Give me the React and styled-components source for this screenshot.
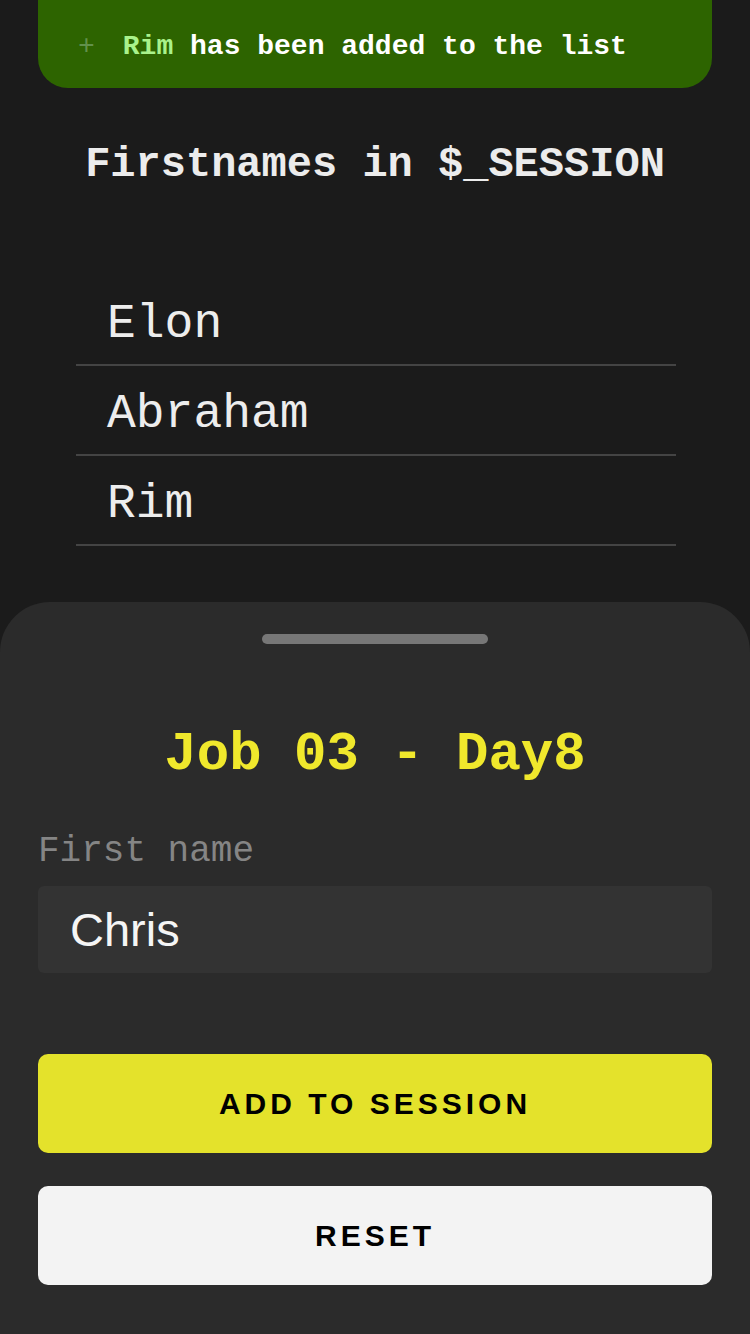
import React from "react";
import styled, { createGlobalStyle } from "styled-components";

const Global = createGlobalStyle`
  html, body { margin: 0; padding: 0; background: #1b1b1b; }
  body { font-family: "Liberation Mono", "Courier New", monospace; }
  * { box-sizing: border-box; }
`;

const Page = styled.div`
  min-height: 1334px;
  background: #1b1b1b;
  display: flex;
  flex-direction: column;
  overflow: hidden;
`;

const Notice = styled.div`
  margin: 0 38px;
  height: 88px;
  background: #2d6400;
  border-radius: 0 0 30px 30px;
  display: flex;
  align-items: center;
  padding: 4px 0 0 40px;
  font-family: "Liberation Mono", monospace;
  font-weight: 700;
  font-size: 28px;
  color: #ffffff;
  white-space: pre;
`;

const Plus = styled.span`
  color: #62914c;
  font-weight: 400;
  margin-right: 28px;
`;

const Hl = styled.span`
  color: #a9f28b;
`;

const Title = styled.h1`
  margin: 56px 0 0;
  font-family: "Liberation Mono", monospace;
  font-size: 42px;
  line-height: 42px;
  font-weight: 700;
  color: #ececec;
  text-align: center;
`;

const List = styled.ul`
  list-style: none;
  margin: 90px 74px 0 76px;
  padding: 0;
`;

const Item = styled.li`
  height: 90px;
  border-bottom: 2px solid #444;
  padding: 24px 0 0 31px;
  font-family: "Liberation Mono", monospace;
  font-size: 48px;
  line-height: 48px;
  color: #ededed;
`;

const Sheet = styled.section`
  margin-top: 56px;
  flex: 1;
  background: #2b2b2b;
  border-radius: 50px 50px 0 0;
  padding: 32px 38px 49px;
  display: flex;
  flex-direction: column;
`;

const Handle = styled.div`
  align-self: center;
  width: 226px;
  height: 10px;
  border-radius: 5px;
  background: #777;
`;

const SheetTitle = styled.h2`
  margin: 84px 0 0;
  text-align: center;
  font-family: "Liberation Mono", monospace;
  font-size: 54px;
  line-height: 54px;
  font-weight: 700;
  color: #f0e82c;
`;

const Label = styled.label`
  margin-top: 52px;
  font-family: "Liberation Mono", monospace;
  font-size: 36px;
  line-height: 36px;
  color: #858585;
`;

const Input = styled.input`
  margin-top: 16px;
  height: 87px;
  width: 100%;
  border: none;
  outline: none;
  border-radius: 6px;
  background: #333333;
  padding: 0 32px;
  font-family: "Liberation Sans", Arial, sans-serif;
  font-size: 47px;
  color: #f5f5f5;
`;

const Button = styled.button`
  height: 99px;
  width: 100%;
  border: none;
  border-radius: 10px;
  margin-top: ${(p) => p.$gap}px;
  background: ${(p) => (p.$primary ? "#e4e22b" : "#f3f3f3")};
  color: #000;
  font-family: "Liberation Sans", Arial, sans-serif;
  font-weight: 700;
  font-size: 30px;
  letter-spacing: 4px;
  text-transform: uppercase;
  cursor: pointer;
`;

export default function App() {
  const names = ["Elon", "Abraham", "Rim"];
  return (
    <Page>
      <Global />
      <Notice>
        <Plus>+</Plus>
        <Hl>Rim</Hl> has been added to the list
      </Notice>
      <Title>Firstnames in $_SESSION</Title>
      <List>
        {names.map((n) => (
          <Item key={n}>{n}</Item>
        ))}
      </List>
      <Sheet>
        <Handle />
        <SheetTitle>Job 03 - Day8</SheetTitle>
        <Label htmlFor="fn">First name</Label>
        <Input id="fn" defaultValue="Chris" />
        <Button $primary $gap={81}>Add to session</Button>
        <Button $gap={33}>Reset</Button>
      </Sheet>
    </Page>
  );
}
